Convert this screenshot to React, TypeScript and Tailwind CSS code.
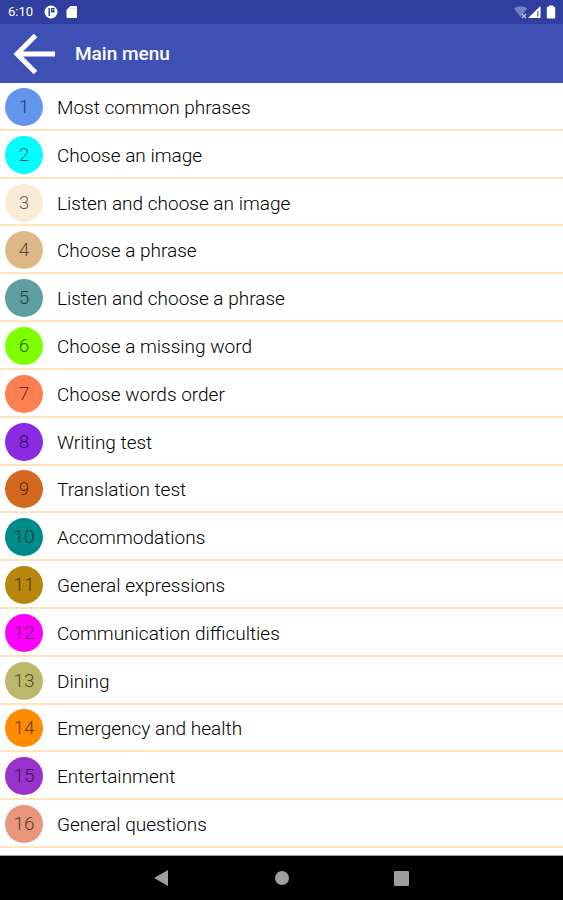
const items = [
  { label: "Most common phrases", color: "bg-[#6495ed]" },
  { label: "Choose an image", color: "bg-[#00ffff]" },
  { label: "Listen and choose an image", color: "bg-[#faebd7]" },
  { label: "Choose a phrase", color: "bg-[#deb887]" },
  { label: "Listen and choose a phrase", color: "bg-[#5f9ea0]" },
  { label: "Choose a missing word", color: "bg-[#7fff00]" },
  { label: "Choose words order", color: "bg-[#ff7f50]" },
  { label: "Writing test", color: "bg-[#8a2be2]" },
  { label: "Translation test", color: "bg-[#d2691e]" },
  { label: "Accommodations", color: "bg-[#008b8b]" },
  { label: "General expressions", color: "bg-[#b8860b]" },
  { label: "Communication difficulties", color: "bg-[#ff00ff]" },
  { label: "Dining", color: "bg-[#bdb76b]" },
  { label: "Emergency and health", color: "bg-[#ff8c00]" },
  { label: "Entertainment", color: "bg-[#9932cc]" },
  { label: "General questions", color: "bg-[#e9967a]" },
];

function StatusBar() {
  return (
    <div className="flex h-6 items-center bg-[#303f9f] pl-2 pr-1.5 text-white">
      <span className="w-9 text-[13px] leading-6">6:10</span>
      <svg className="h-3.5 w-3.5" viewBox="0 0 14 14" aria-hidden="true">
        <circle cx="7" cy="7" r="6.5" fill="#fff" />
        <path d="M4.500 3h1.500v8H4.500zM7 3h3.500v4.500H7z" fill="#303f9f" />
        <path d="M8.200 4h1v1.500h-1z" fill="#fff" />
      </svg>
      <svg className="ml-2 h-3.5 w-3" viewBox="0 0 12 14" aria-hidden="true">
        <path d="M4.500 1H10a1 1 0 0 1 1 1v10a1 1 0 0 1-1 1H1.500a1 1 0 0 1-1-1V5z" fill="#fff" />
        <path d="M5 3v1M7 3v1M9 3v1" stroke="#303f9f" strokeWidth="0.400" />
      </svg>
      <svg className="ml-auto h-3.5 w-3.5" viewBox="0 0 14 14" aria-hidden="true">
        <path d="M1 3.500C4.500 .5 10.500 .5 14 3.500L7.500 12z" fill="#7781c0" />
        <path d="M9 9l4 4M13 9l-4 4" stroke="#c5cae9" strokeWidth="1.200" />
      </svg>
      <svg className="h-3.5 w-3.5" viewBox="0 0 14 14" aria-hidden="true">
        <path d="M13.500 1v12H1z" fill="#fff" />
        <path d="M10.800 6v5.500" stroke="#303f9f" strokeWidth="1" />
      </svg>
      <svg className="ml-1 h-3.5 w-3" viewBox="0 0 12 14" aria-hidden="true">
        <path d="M4 .5h4l.5 1.200h.7a1 1 0 0 1 1 1V12.500a1 1 0 0 1-1 1H2.800a1 1 0 0 1-1-1V2.700a1 1 0 0 1 1-1h.7z" fill="#fff" />
      </svg>
    </div>
  );
}

function AppBar() {
  return (
    <header className="flex h-[59px] items-center bg-[#3f51b5] pl-[13px]">
      <button type="button" aria-label="Back" className="h-[42px] w-[42px]">
        <svg className="h-[42px] w-[42px]" viewBox="0 0 42 42" fill="none" stroke="#fff" strokeWidth="5" aria-hidden="true">
          <path d="M22.500 2.500L4 21l18.500 18.500M4 21H42" />
        </svg>
      </button>
      <h1 className="ml-5 text-[19px] font-medium leading-6 text-white">Main menu</h1>
    </header>
  );
}

function NavBar() {
  return (
    <nav className="flex h-11 items-center justify-center gap-[90px] bg-black" aria-label="System navigation">
      <button type="button" aria-label="Back" className="flex h-[30px] w-[30px] items-center justify-center">
        <svg className="h-4 w-4" viewBox="0 0 16 16" aria-hidden="true">
          <path d="M0 8L14 0v16z" fill="#9e9e9e" />
        </svg>
      </button>
      <button type="button" aria-label="Home" className="flex h-[30px] w-[30px] items-center justify-center">
        <span className="h-3.5 w-3.5 rounded-full bg-[#9e9e9e]" />
      </button>
      <button type="button" aria-label="Recent apps" className="flex h-[30px] w-[30px] items-center justify-center">
        <span className="h-[15px] w-[15px] rounded-[1px] bg-[#9e9e9e]" />
      </button>
    </nav>
  );
}

export default function App() {
  return (
    <div className="flex min-h-screen flex-col bg-white font-['Roboto',sans-serif]">
      <StatusBar />
      <AppBar />
      <main className="flex flex-1 flex-col border-b border-[#9e9e9e] pb-[7px]">
        <ul className="flex flex-1 flex-col">
          {items.map((item, index) => (
            <li key={item.label} className="flex flex-1 border-b-2 border-[#ffe4bc]">
              <button type="button" className="flex flex-1 items-center pl-[5px] pt-0.5 text-left">
                <span
                  className={`flex h-[38px] w-[38px] items-center justify-center rounded-full text-[19px] font-light leading-6 text-black/65 ${item.color}`}
                >
                  {index + 1}
                </span>
                <span className="ml-3.5 pt-0.5 text-[19px] font-light leading-6 text-black">{item.label}</span>
              </button>
            </li>
          ))}
        </ul>
      </main>
      <NavBar />
    </div>
  );
}
